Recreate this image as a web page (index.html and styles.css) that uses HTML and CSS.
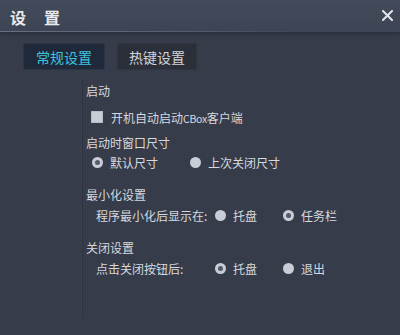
FILE: index.html
```html
<!DOCTYPE html>
<html lang="zh-CN">
<head>
<meta charset="utf-8">
<title>设置</title>
<link rel="stylesheet" href="styles.css">
</head>
<body>
<div class="window">
  <header class="titlebar">
    <h1 class="title"><span>设</span><span>置</span></h1>
    <svg class="close" width="11" height="11" viewBox="0 0 11 11"><path d="M1 1 L10 10 M10 1 L1 10" stroke="#e2e6ec" stroke-width="2" stroke-linecap="square"/></svg>
  </header>
  <nav class="tabs">
    <div class="tab tab-active">常规设置</div>
    <div class="tab tab-second">热键设置</div>
  </nav>
  <main class="content">
    <section class="group group-first">
      <div class="heading">启动</div>
      <div class="row row-check"><span class="checkbox"></span><span>开机自动启动<span class="latin">CBox</span>客户端</span></div>
    </section>
    <section class="group group-second">
      <div class="heading">启动时窗口尺寸</div>
      <div class="row row-radio">
        <label class="opt opt-wide"><span class="radio on"></span>默认尺寸</label>
        <label class="opt"><span class="radio"></span>上次关闭尺寸</label>
      </div>
    </section>
    <section class="group">
      <div class="heading">最小化设置</div>
      <div class="row row-labelled">
        <span class="label">程序最小化后显示在:</span>
        <label class="opt opt-mid"><span class="radio"></span>托盘</label>
        <label class="opt"><span class="radio on"></span>任务栏</label>
      </div>
    </section>
    <section class="group">
      <div class="heading">关闭设置</div>
      <div class="row row-labelled">
        <span class="label">点击关闭按钮后:</span>
        <label class="opt opt-mid"><span class="radio on"></span>托盘</label>
        <label class="opt"><span class="radio"></span>退出</label>
      </div>
    </section>
  </main>
</div>
</body>
</html>
```
FILE: styles.css
```css
* { box-sizing: border-box; }
html, body { margin: 0; padding: 0; }
body {
  width: 400px;
  height: 335px;
  overflow: hidden;
  background: #363c4a;
  font-family: "Noto Sans CJK SC", "Noto Sans", sans-serif;
  color: #d6d9df;
}
.window { width: 400px; height: 335px; display: flex; flex-direction: column; }
.titlebar {
  height: 32px;
  flex: none;
  display: flex;
  align-items: center;
  justify-content: space-between;
  padding: 3px 4px 0 10px;
  background: linear-gradient(180deg, #434a5a 0%, #3d4454 100%);
  border-bottom: 1px solid transparent;
  border-image: linear-gradient(90deg, #6a7080 0%, #555b6a 50%, #3f4554 75%, #3f4554 100%) 1;
  box-shadow: 0 2px 3px rgba(20, 24, 32, 0.35);
}
.title {
  margin: 0;
  font-size: 16px;
  font-weight: 700;
  color: #e8eaee;
  display: flex;
  gap: 18px;
  line-height: 20px;
}
.close { display: block; margin-right: 3px; margin-top: -4px; }
.tabs {
  flex: none;
  display: flex;
  gap: 12px;
  padding: 11px 0 0 23px;
  height: 48px;
  align-items: flex-start;
}
.tab {
  height: 27px;
  display: flex;
  align-items: center;
  justify-content: center;
  font-size: 14px;
  padding-top: 1px;
}
.tab-active {
  width: 82px;
  background: #1f2939;
  color: #3ec3df;
  border: 1px solid #2a3445;
}
.tab-second {
  width: 80px;
  background: #2a2f3a;
  color: #d0d4da;
  border: 1px solid #30353f;
}
.content {
  margin-left: 82px;
  height: 238px;
  border-left: 1px solid #2c323e;
  box-shadow: -1px 0 0 #3a4050;
  padding: 2px 0 0 3px;
  font-size: 12px;
}
.group { display: flex; flex-direction: column; }
.group + .group { margin-top: 14px; }
.group-second { margin-top: 7px !important; }
.heading { height: 18px; line-height: 18px; }
.row { height: 20px; display: flex; align-items: center; }
.group-first .row { margin-top: 7px; }
.row-labelled { margin-top: 1px; }
.row-check { padding-left: 5px; gap: 8px; }
.row-radio { padding-left: 6px; }
.row-labelled { padding-left: 10px; }
.label { width: 119px; }
.latin { font-size: 10.5px; letter-spacing: -0.3px; }
.checkbox {
  width: 12px;
  height: 12px;
  background: #c9cdd6;
  border: 1px solid #b6bbc5;
}
.opt { display: flex; align-items: center; gap: 7px; }
.opt-wide { width: 98px; }
.opt-mid { width: 68px; }
.radio {
  width: 11px;
  height: 11px;
  border-radius: 50%;
  background: #c9cdd8;
  position: relative;
}
.radio.on::after {
  content: "";
  position: absolute;
  left: 3px;
  top: 3px;
  width: 5px;
  height: 5px;
  border-radius: 50%;
  background: #545a68;
}
```
